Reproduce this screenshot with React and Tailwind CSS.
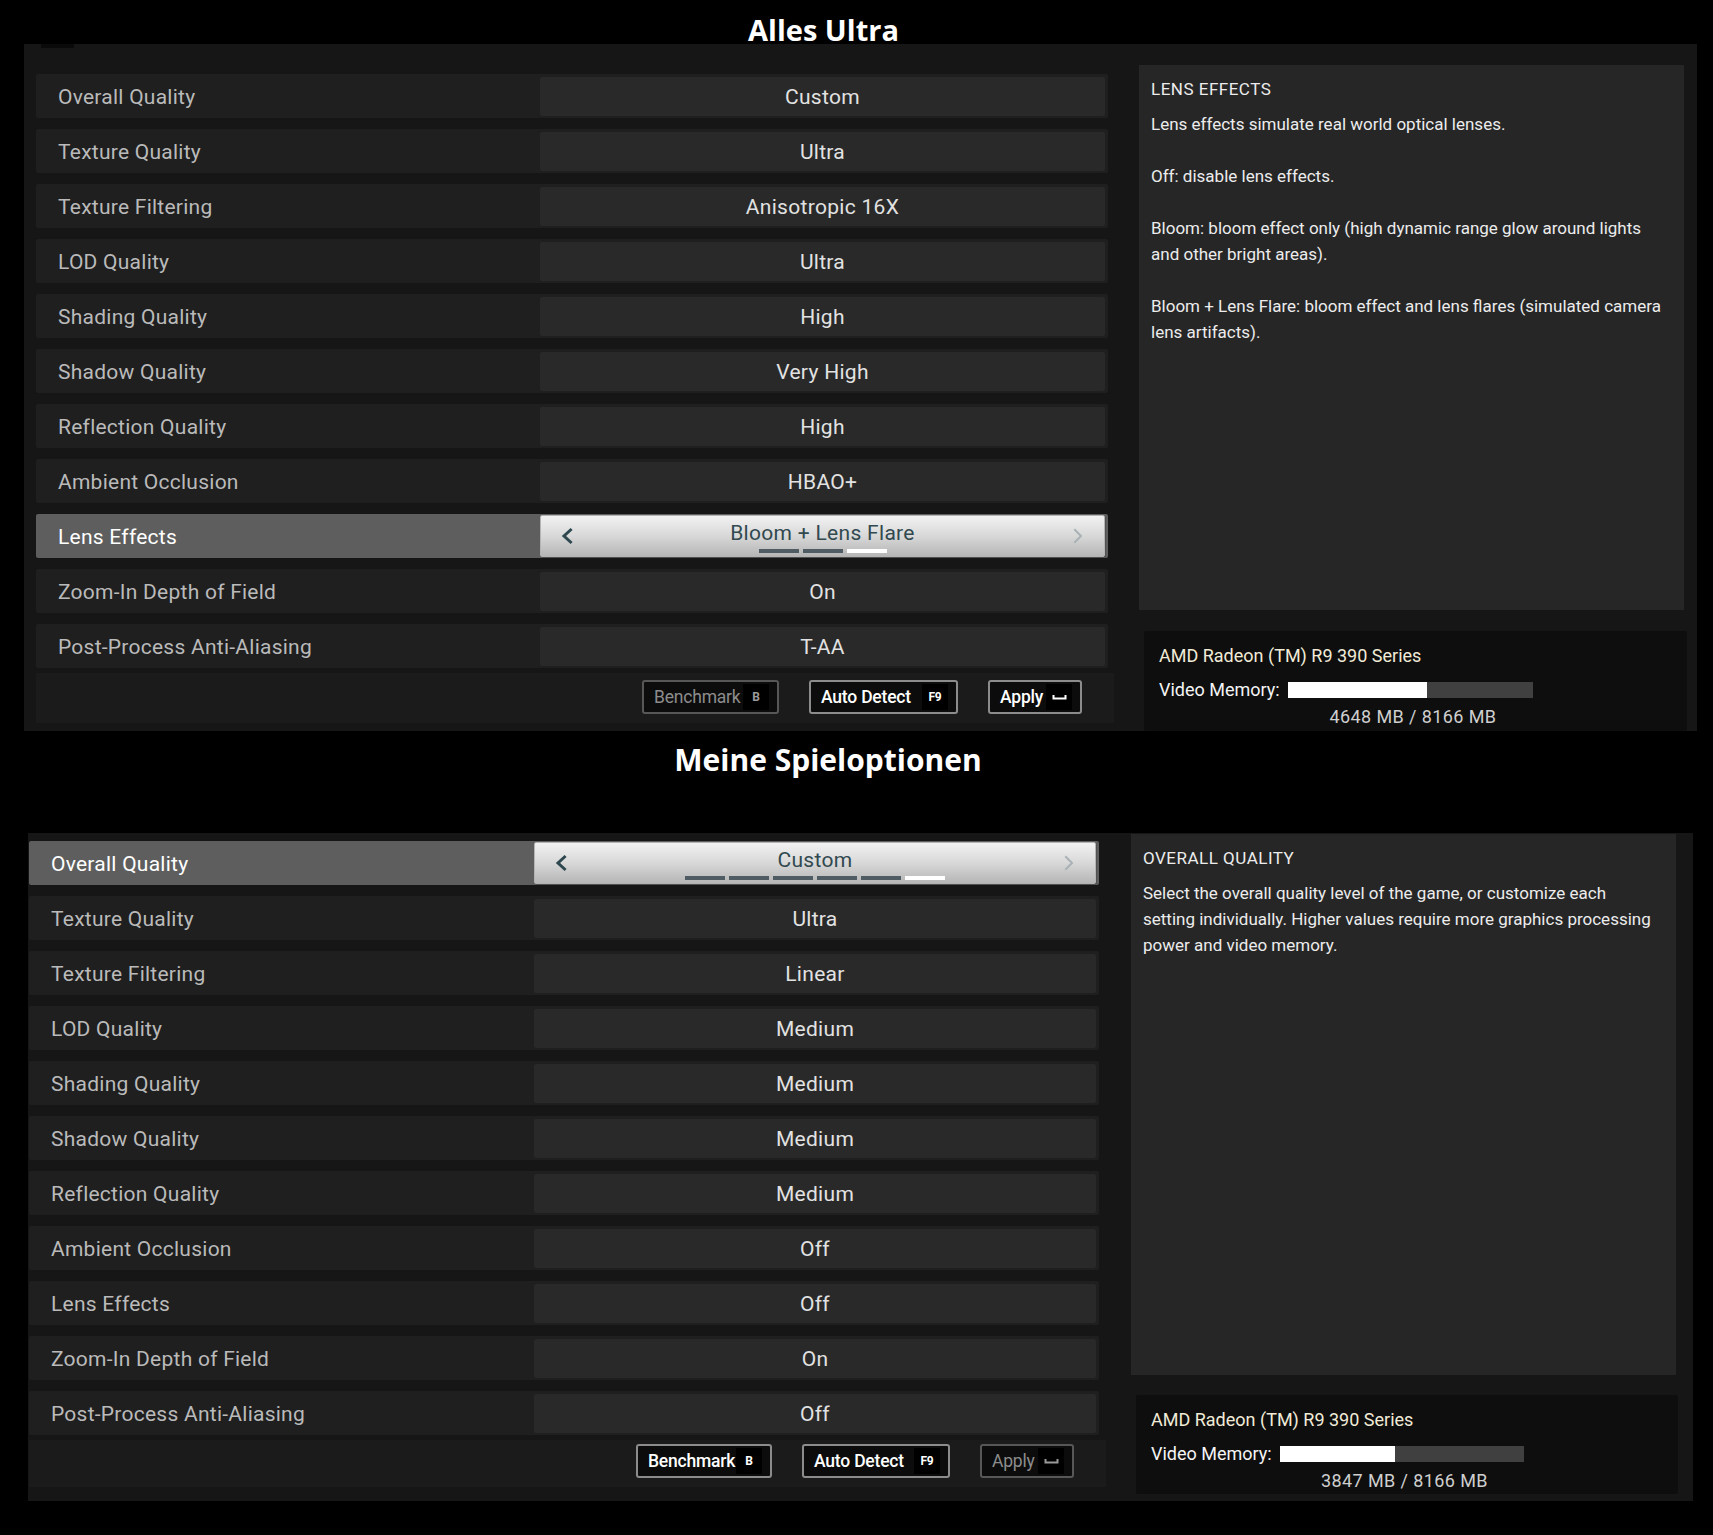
import React from 'react'

const LABELS = [
  'Overall Quality',
  'Texture Quality',
  'Texture Filtering',
  'LOD Quality',
  'Shading Quality',
  'Shadow Quality',
  'Reflection Quality',
  'Ambient Occlusion',
  'Lens Effects',
  'Zoom-In Depth of Field',
  'Post-Process Anti-Aliasing',
]

const ULTRA = ['Custom', 'Ultra', 'Anisotropic 16X', 'Ultra', 'High', 'Very High', 'High', 'HBAO+', 'Bloom + Lens Flare', 'On', 'T-AA']
const MINE = ['Custom', 'Ultra', 'Linear', 'Medium', 'Medium', 'Medium', 'Medium', 'Off', 'Off', 'On', 'Off']

function Chevron({ dir, color }) {
  return (
    <svg width="14" height="18" viewBox="0 0 14 18" className="shrink-0">
      <path
        d={dir === 'left' ? 'M10.5 3 L4 9 L10.5 15' : 'M4 3 L10 9 L4 15'}
        fill="none"
        stroke={color}
        strokeWidth={dir === 'left' ? 3 : 2}
        strokeLinecap="square"
      />
    </svg>
  )
}

function Selector({ value, bars, pos, width }) {
  return (
    <div className={`${width} mr-[3px] my-[1px] flex items-center px-[19px] rounded-[2px] border border-[#b4b4b4] bg-linear-to-b from-[#f2f2f2] via-[#d8d8d8] to-[#b6b6b6] shadow-[1px_1px_0_#505050]`}>
      <Chevron dir="left" color="#2e4850" />
      <div className="flex-1 flex flex-col items-center self-stretch pt-[5px]">
        <span className="text-[21px] leading-[24px] text-[#31494f] tracking-[0.3px]">{value}</span>
        <div className="flex gap-[4px] mt-[4px]">
          {Array.from({ length: bars }).map((_, i) => (
            <div key={i} className={`w-[40px] h-[4px] ${i === pos ? 'bg-white' : 'bg-[#4f5c63]'}`} />
          ))}
        </div>
      </div>
      <Chevron dir="right" color="#a9b2b6" />
    </div>
  )
}

function Row({ label, value, active, bars, pos, width }) {
  return (
    <div className={`flex h-[44px] rounded-[2px] ${active ? 'bg-[#5e5e5e]' : 'bg-[#1f1f1f]'}`}>
      <div className={`flex-1 flex items-center pl-[22px] pt-[3px] text-[21px] tracking-[0.25px] ${active ? 'text-white' : 'text-[#bababa]'}`}>
        {label}
      </div>
      {active ? (
        <Selector value={value} bars={bars} pos={pos} width={width} />
      ) : (
        <div className={`${width} mr-[3px] mt-[3px] mb-[2px] pt-[2px] rounded-[2px] bg-[#292929] flex items-center justify-center text-[21px] tracking-[0.3px] text-[#e2e2e2]`}>
          {value}
        </div>
      )}
    </div>
  )
}

function KeyCap({ k, dim }) {
  return (
    <span className={`w-[26px] h-[26px] bg-black flex items-center justify-center text-[12px] font-bold ${dim ? 'text-[#9a9a9a]' : 'text-white'}`}>
      {k === 'space' ? (
        <svg width="15" height="8" viewBox="0 0 15 8">
          <path d="M1.5 2 V5.5 H13.5 V2" fill="none" stroke="currentColor" strokeWidth="2" />
        </svg>
      ) : (
        k
      )}
    </span>
  )
}

function Btn({ label, k, dim, w }) {
  return (
    <div className={`${w} h-[34px] flex items-center justify-between pl-[10px] pr-[8px] rounded-[3px] border-2 bg-[#0c0c0c] text-[17.5px] tracking-[-0.2px] ${dim ? 'border-[#575757] text-[#8c8c8c]' : 'border-[#8c8c8c] text-white font-medium'}`}>
      <span>{label}</span>
      <KeyCap k={k} dim={dim} />
    </div>
  )
}

function Description({ title, paras, cls }) {
  return (
    <div className={`${cls} bg-[#262626] px-[12px] pt-[11px] text-[17px] leading-[26px] text-[#ececec]`}>
      <p className="uppercase tracking-[0.5px]">{title}</p>
      <div className="mt-[9px] flex flex-col gap-[26px]">
        {paras.map((p, i) => (
          <p key={i}>{p}</p>
        ))}
      </div>
    </div>
  )
}

function Gpu({ used, cls, barCls }) {
  const pct = (used / 8166) * 100
  return (
    <div className={`${cls} bg-[#0e0e0e] rounded-[2px] pl-[15px] pt-[12px] text-[18px] leading-[26px]`}>
      <p className="text-[#f1ebd8]">AMD Radeon (TM) R9 390 Series</p>
      <div className="mt-[8px] flex items-center gap-[8px]">
        <span className="text-[#f4f4f4]">Video Memory:</span>
        <div className={`${barCls} h-[16px] bg-[#404040]`}>
          <div className="h-full bg-white" style={{ width: `${pct}%` }} />
        </div>
      </div>
      <p className="mt-[1px] text-center pr-[20px] tracking-[0.4px] text-[#cfcfcf]">{used} MB / 8166 MB</p>
    </div>
  )
}

export default function App() {
  return (
    <div className="w-[1713px] min-h-[1535px] bg-black font-['Roboto',sans-serif]">
      <div className="h-[44px] pt-[15px] pr-[66px] text-center text-white text-[29px] leading-none font-bold font-['Open_Sans',sans-serif]">
        Alles Ultra
      </div>

      {/* Alles Ultra */}
      <div className="ml-[24px] w-[1673px] h-[687px] bg-[#161616] flex">
        <div className="w-[1090px] pl-[12px] flex flex-col">
          <div className="ml-[5px] w-[33px] h-[4px] bg-[#0a0a0a]" />
          <div className="mt-[26px] w-[1072px] flex flex-col gap-[11px]">
            {LABELS.map((l, i) => (
              <Row key={l} label={l} value={ULTRA[i]} active={i === 8} bars={3} pos={2} width="w-[565px]" />
            ))}
          </div>
          <div className="mt-[5px] w-[1078px] h-[50px] bg-[#1b1b1b] flex justify-end items-start pt-[7px] pr-[32px] gap-[30px]">
            <Btn label="Benchmark" k="B" dim w="w-[137px]" />
            <Btn label="Auto Detect" k="F9" w="w-[149px]" />
            <Btn label="Apply" k="space" w="w-[94px]" />
          </div>
        </div>
        <div className="flex flex-col">
          <Description
            cls="ml-[25px] mt-[21px] w-[545px] h-[545px]"
            title="Lens Effects"
            paras={[
              'Lens effects simulate real world optical lenses.',
              'Off: disable lens effects.',
              'Bloom: bloom effect only (high dynamic range glow around lights and other bright areas).',
              'Bloom + Lens Flare: bloom effect and lens flares (simulated camera lens artifacts).',
            ]}
          />
          <Gpu used={4648} cls="ml-[30px] mt-[21px] w-[543px] flex-1" barCls="w-[245px]" />
        </div>
      </div>

      <div className="h-[102px] pt-[14px] pr-[57px] text-center text-white text-[30px] leading-none font-bold font-['Open_Sans',sans-serif]">
        Meine Spieloptionen
      </div>

      {/* Meine Spieloptionen */}
      <div className="ml-[28px] w-[1665px] h-[668px] bg-[#161616] flex">
        <div className="w-[1078px] pl-[1px] flex flex-col">
          <div className="mt-[8px] w-[1070px] flex flex-col gap-[11px]">
            {LABELS.map((l, i) => (
              <Row key={l} label={l} value={MINE[i]} active={i === 0} bars={6} pos={5} width="w-[562px]" />
            ))}
          </div>
          <div className="mt-[5px] w-[1077px] h-[47px] bg-[#1b1b1b] flex justify-end items-start pt-[4px] pr-[32px] gap-[30px]">
            <Btn label="Benchmark" k="B" w="w-[136px]" />
            <Btn label="Auto Detect" k="F9" w="w-[148px]" />
            <Btn label="Apply" k="space" dim w="w-[94px]" />
          </div>
        </div>
        <div className="flex flex-col pb-[7px]">
          <Description
            cls="ml-[25px] mt-[1px] w-[545px] h-[541px]"
            title="Overall Quality"
            paras={[
              <>
                Select the overall quality level of the game, or customize each
                <br />
                setting individually. Higher values require more graphics processing
                <br />
                power and video memory.
              </>,
            ]}
          />
          <Gpu used={3847} cls="ml-[30px] mt-[20px] w-[542px] flex-1" barCls="w-[244px]" />
        </div>
      </div>
    </div>
  )
}
